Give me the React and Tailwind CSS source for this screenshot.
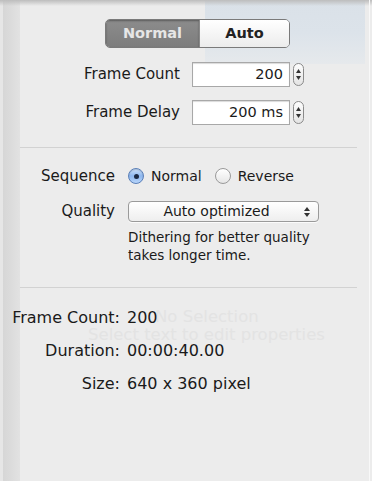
import React from "react";

function Stepper() {
  return (
    <div className="ml-[3px] flex h-[23px] w-[11px] flex-col items-center justify-center gap-[3px] rounded-[6px] border border-[#8a8a8a] bg-gradient-to-b from-[#fdfdfd] to-[#e4e4e4]">
      <svg width="5" height="4" viewBox="0 0 5 4"><path d="M2.5 0L5 4H0z" fill="#333" /></svg>
      <svg width="5" height="4" viewBox="0 0 5 4"><path d="M0 0h5L2.5 4z" fill="#333" /></svg>
    </div>
  );
}

function Radio({ checked }) {
  return checked ? (
    <span className="flex h-[16px] w-[16px] items-center justify-center rounded-full border border-[#5a7fb8] bg-gradient-to-b from-[#cfe3fb] via-[#8db7ef] to-[#b9d6fa] shadow-[inset_0_1px_1px_rgba(0,0,0,0.15)]">
      <span className="h-[5px] w-[5px] rounded-full bg-[#1b2a44]" />
    </span>
  ) : (
    <span className="h-[16px] w-[16px] rounded-full border border-[#9a9a9a] bg-gradient-to-b from-[#ffffff] to-[#e6e6e6]" />
  );
}

export default function App() {
  return (
    <div
      className="relative h-[481px] w-[372px] overflow-hidden bg-[#ececec] text-[#1a1a1a]"
      style={{ fontFamily: '"DejaVu Sans", "Liberation Sans", sans-serif' }}
    >
      {/* backdrop decorations */}
      <div className="absolute inset-y-0 left-0 w-[3px] bg-[#e6e6e6]" />
      <div className="absolute inset-y-0 left-[3px] w-[17px] bg-gradient-to-r from-[#d6d6d6] via-[#dcdcdc] to-[#e2e2e2]" />
      <div className="absolute left-[205px] top-0 h-[64px] w-[160px] bg-gradient-to-b from-[#dae1e8] via-[#dce3ea] to-[#e6e9ec]" />
      <div className="absolute inset-x-0 top-0 h-[6px] bg-gradient-to-b from-[#bdbdbd] to-transparent" />
      <div className="absolute inset-y-0 right-[2px] w-[1px] bg-[#f8f8f8]" />
      <div className="absolute left-[155px] top-[307px] text-[16.5px] leading-[20px] text-[#e3e3e3]">No Selection</div>
      <div className="absolute left-[88px] top-[325px] text-[16.5px] leading-[20px] text-[#e3e3e3]">Select text to edit properties</div>

      <div className="relative flex flex-col">
        {/* Segmented control */}
        <div className="ml-[105px] mt-[19px] flex h-[29px] w-[185px] overflow-hidden rounded-[5px] border border-[#7a7a7a] text-[14.5px] font-bold">
          <div className="flex w-[93px] items-center justify-center bg-gradient-to-b from-[#8c8c8c] to-[#7d7d7d] text-[#e6e6e6] shadow-[inset_0_1px_2px_rgba(0,0,0,0.35)]">
            Normal
          </div>
          <div className="flex flex-1 items-center justify-center border-l border-[#8a8a8a] bg-gradient-to-b from-[#ffffff] to-[#ececec] text-[#222]">
            Auto
          </div>
        </div>

        {/* Frame count / delay */}
        <div className="mt-[14px] flex h-[25px] items-center">
          <div className="w-[180px] text-right text-[15px]">Frame Count</div>
          <div className="ml-[12px] flex h-[25px] w-[98px] items-center justify-end border border-[#a8a8a8] bg-white pr-[6px] text-[14.5px] shadow-[inset_0_1px_1px_rgba(0,0,0,0.15)]">
            200
          </div>
          <Stepper />
        </div>
        <div className="mt-[13px] flex h-[25px] items-center">
          <div className="w-[180px] text-right text-[15px]">Frame Delay</div>
          <div className="ml-[12px] flex h-[25px] w-[98px] items-center justify-end border border-[#a8a8a8] bg-white pr-[6px] text-[14.5px] shadow-[inset_0_1px_1px_rgba(0,0,0,0.15)]">
            200 ms
          </div>
          <Stepper />
        </div>

        <div className="ml-[20px] mt-[22px] h-[1px] w-[337px] bg-[#d2d2d2]" />

        {/* Sequence / quality */}
        <div className="mt-[18px] flex h-[20px] items-center">
          <div className="w-[115px] text-right text-[15px]">Sequence</div>
          <div className="ml-[13px] flex items-center gap-[7px] text-[14px]">
            <Radio checked />
            <span>Normal</span>
          </div>
          <div className="ml-[13px] flex items-center gap-[7px] text-[14px]">
            <Radio />
            <span>Reverse</span>
          </div>
        </div>
        <div className="mt-[15px] flex h-[21px] items-center">
          <div className="w-[115px] text-right text-[15px]">Quality</div>
          <div className="relative ml-[13px] flex h-[21px] w-[191px] items-center justify-center rounded-[4px] border border-[#9a9a9a] bg-gradient-to-b from-[#ffffff] to-[#eeeeee] pr-[14px] text-[14px] shadow-[0_1px_0_rgba(255,255,255,0.8)]">
            Auto optimized
            <svg className="absolute right-[8px] top-[5px]" width="6" height="10" viewBox="0 0 6 10">
              <path d="M3 0L6 4H0z" fill="#333" />
              <path d="M0 6h6L3 10z" fill="#333" />
            </svg>
          </div>
        </div>
        <div className="ml-[128px] mt-[6px] text-[13.5px] leading-[18px]">
          Dithering for better quality
          <br />
          takes longer time.
        </div>

        <div className="ml-[20px] mt-[23px] h-[1px] w-[337px] bg-[#d2d2d2]" />

        {/* Info */}
        <div className="mt-[20px] flex flex-col gap-[13px] text-[16px] leading-[20px]">
          <div className="flex">
            <div className="w-[120px] text-right">Frame Count:</div>
            <div className="ml-[7px]">200</div>
          </div>
          <div className="flex">
            <div className="w-[120px] text-right">Duration:</div>
            <div className="ml-[7px]">00:00:40.00</div>
          </div>
          <div className="flex">
            <div className="w-[120px] text-right">Size:</div>
            <div className="ml-[7px]">640 x 360 pixel</div>
          </div>
        </div>
      </div>
    </div>
  );
}
